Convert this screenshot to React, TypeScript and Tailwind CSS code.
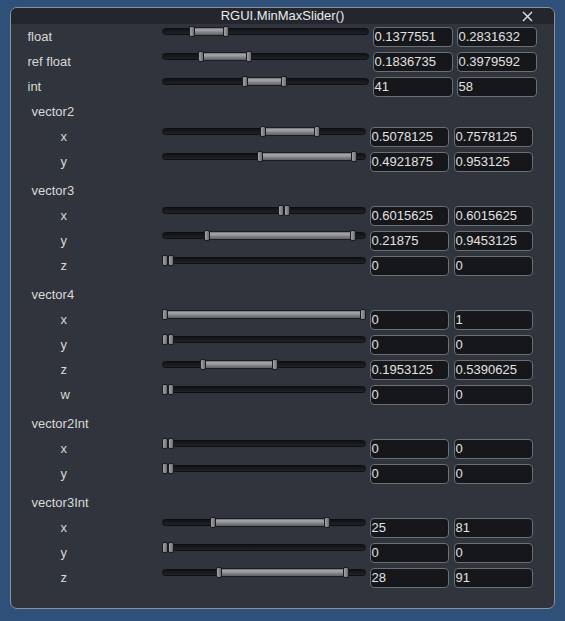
import React from "react";

const FONT = { fontFamily: '"Liberation Sans", Arial, sans-serif' };

function Slider({ min, max, w }: { min: number; max: number; w: number }) {
  const span = w - 12;
  const left = Math.round(min * span);
  const right = Math.round(max * span) + 12;
  return (
    <div className="relative h-[11px] shrink-0" style={{ width: w }}>
      <div className="absolute left-0 right-0 top-[2px] h-[7px] rounded-full border border-[#0d0e11] bg-[linear-gradient(#111216,#202227)]" />
      <div
        className="absolute top-[1px] h-[9px] border border-[#1a1b1f] bg-[linear-gradient(#6c6e71_0%,#a7a9ac_25%,#8e9093_50%,#75777a_75%,#5c5e61_100%)]"
        style={{ left: left + 2, width: right - left - 4 }}
      />
      <div
        className="absolute top-0 h-[11px] w-[6px] rounded-[2px] border border-[#1a1b1f] bg-[linear-gradient(90deg,#a2a4a7,#6a6c6f)]"
        style={{ left }}
      />
      <div
        className="absolute top-0 h-[11px] w-[6px] rounded-[2px] border border-[#1a1b1f] bg-[linear-gradient(90deg,#a2a4a7,#6a6c6f)]"
        style={{ left: right - 6 }}
      />
    </div>
  );
}

function Box({ v, w }: { v: string; w: number }) {
  return (
    <div
      className="mt-[1px] h-[20px] shrink-0 rounded-[4px] border border-[#6c6f74] bg-[#16171b] pl-[1px] text-[13px] leading-[18px] text-[#e2e2e2]"
      style={{ width: w }}
    >
      {v}
    </div>
  );
}

function TopRow({ label, min, max, a, b }: { label: string; min: number; max: number; a: string; b: string }) {
  return (
    <div className="flex h-[25px] items-start">
      <div className="mt-[1px] w-[134px] shrink-0 text-[13px] leading-[20px] text-[#d8d8d8]">{label}</div>
      <Slider min={min} max={max} w={207} />
      <div className="ml-[4px]">
        <Box v={a} w={80} />
      </div>
      <div className="ml-[4px]">
        <Box v={b} w={80} />
      </div>
    </div>
  );
}

function SubRow({ label, min, max, a, b }: { label: string; min: number; max: number; a: string; b: string }) {
  return (
    <div className="flex h-[25px] items-start">
      <div className="mt-[1px] w-[134px] shrink-0 pl-[33px] text-[13px] leading-[20px] text-[#d8d8d8]">{label}</div>
      <Slider min={min} max={max} w={204} />
      <div className="ml-[4px]">
        <Box v={a} w={79} />
      </div>
      <div className="ml-[5px]">
        <Box v={b} w={79} />
      </div>
    </div>
  );
}

type Sub = { l: string; min: number; max: number; a: string; b: string };

function Group({ title, rows }: { title: string; rows: Sub[] }) {
  return (
    <div className="mt-[4px] flex flex-col first:mt-0">
      <div className="h-[25px] pl-[4px] pt-[1px] text-[13px] leading-[20px] text-[#d8d8d8]">{title}</div>
      {rows.map((r) => (
        <SubRow key={r.l} label={r.l} min={r.min} max={r.max} a={r.a} b={r.b} />
      ))}
    </div>
  );
}

export default function App() {
  const groups: { title: string; rows: Sub[] }[] = [
    {
      title: "vector2",
      rows: [
        { l: "x", min: 0.5078125, max: 0.7578125, a: "0.5078125", b: "0.7578125" },
        { l: "y", min: 0.4921875, max: 0.953125, a: "0.4921875", b: "0.953125" },
      ],
    },
    {
      title: "vector3",
      rows: [
        { l: "x", min: 0.6015625, max: 0.6015625, a: "0.6015625", b: "0.6015625" },
        { l: "y", min: 0.21875, max: 0.9453125, a: "0.21875", b: "0.9453125" },
        { l: "z", min: 0, max: 0, a: "0", b: "0" },
      ],
    },
    {
      title: "vector4",
      rows: [
        { l: "x", min: 0, max: 1, a: "0", b: "1" },
        { l: "y", min: 0, max: 0, a: "0", b: "0" },
        { l: "z", min: 0.1953125, max: 0.5390625, a: "0.1953125", b: "0.5390625" },
        { l: "w", min: 0, max: 0, a: "0", b: "0" },
      ],
    },
    {
      title: "vector2Int",
      rows: [
        { l: "x", min: 0, max: 0, a: "0", b: "0" },
        { l: "y", min: 0, max: 0, a: "0", b: "0" },
      ],
    },
    {
      title: "vector3Int",
      rows: [
        { l: "x", min: 0.25, max: 0.81, a: "25", b: "81" },
        { l: "y", min: 0, max: 0, a: "0", b: "0" },
        { l: "z", min: 0.28, max: 0.91, a: "28", b: "91" },
      ],
    },
  ];

  return (
    <div className="min-h-[621px] w-[565px] overflow-hidden bg-[#2f5079] pl-[10px] pt-[7px]" style={FONT}>
      <div className="flex h-[602px] w-[545px] flex-col overflow-hidden rounded-[7px] border-[1.5px] border-[#8e9196] bg-[#30343c]">
        <div className="relative flex h-[16px] shrink-0 items-center justify-center bg-[#23262c]">
          <span className="text-[13px] leading-[16px] text-[#ececec]">RGUI.MinMaxSlider()</span>
          <svg className="absolute left-[511px] top-[3px]" width="11" height="11" viewBox="0 0 11 11">
            <path d="M1 1 L10 10 M10 1 L1 10" stroke="#e6e6e6" strokeWidth="1.4" />
          </svg>
        </div>
        <div className="flex flex-col pl-[16.5px] pt-[2px]">
          <TopRow label="float" min={0.1377551} max={0.2831632} a="0.1377551" b="0.2831632" />
          <TopRow label="ref float" min={0.1836735} max={0.3979592} a="0.1836735" b="0.3979592" />
          <TopRow label="int" min={0.41} max={0.58} a="41" b="58" />
          <div className="flex flex-col">
            {groups.map((g) => (
              <Group key={g.title} title={g.title} rows={g.rows} />
            ))}
          </div>
        </div>
      </div>
    </div>
  );
}
